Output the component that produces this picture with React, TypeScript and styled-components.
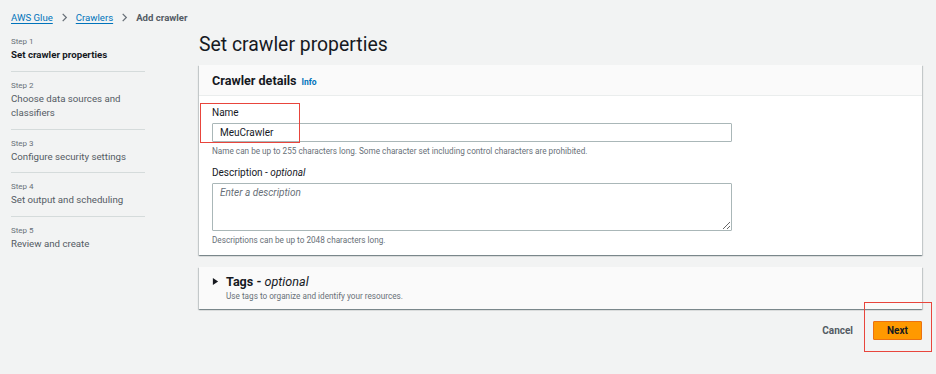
import styled, { createGlobalStyle } from 'styled-components';

const GlobalStyle = createGlobalStyle`
  html, body {
    margin: 0;
    padding: 0;
    background: #f2f3f3;
    font-family: Roboto, "Noto Sans", Arial, sans-serif;
    color: #16191f;
  }
`;

const Page = styled.div`
  width: 936px;
  height: 374px;
  padding: 0 14px 0 11px;
  box-sizing: border-box;
  overflow: hidden;
`;

const Breadcrumbs = styled.nav`
  display: flex;
  align-items: center;
  gap: 7px;
  height: 34px;
  font-size: 9.6px;
`;

const Crumb = styled.a`
  color: #0073bb;
  text-decoration: underline;
  text-underline-offset: 2px;
`;

const Current = styled.span`
  color: #545b64;
  font-weight: 700;
`;

const Chevron = styled.svg`
  width: 9px;
  height: 9px;
`;

const Layout = styled.div`
  display: grid;
  grid-template-columns: 134px 1fr;
  column-gap: 54px;
`;

const Steps = styled.ol`
  list-style: none;
  margin: 0;
  padding: 1px 0 0;
`;

const Step = styled.li<{ $last?: boolean }>`
  padding: 0 0 8px;
  margin-bottom: 7px;
  border-bottom: ${(p) => (p.$last ? 'none' : '1px solid #d5dbdb')};
`;

const StepNum = styled.div`
  font-size: 8px;
  line-height: 13px;
  color: #687078;
`;

const StepTitle = styled.div<{ $active?: boolean }>`
  font-size: 9.7px;
  line-height: 14.5px;
  color: ${(p) => (p.$active ? '#16191f' : '#545b64')};
  font-weight: ${(p) => (p.$active ? 700 : 400)};
`;

const Main = styled.main`
  display: flex;
  flex-direction: column;
`;

const Title = styled.h1`
  margin: 0 0 9px;
  font-size: 19.4px;
  line-height: 22px;
  font-weight: 400;
  color: #16191f;
`;

const Card = styled.section`
  background: #fff;
  box-shadow: 0 1px 1px 0 rgba(0, 28, 36, 0.3), 1px 1px 1px 0 rgba(0, 28, 36, 0.15),
    -1px 1px 1px 0 rgba(0, 28, 36, 0.15);
  margin-bottom: 12px;
`;

const CardHeader = styled.header`
  display: flex;
  align-items: baseline;
  gap: 5px;
  height: 31px;
  padding: 0 13px;
  box-sizing: border-box;
  line-height: 31px;
  background: #fafafa;
  border-bottom: 1px solid #eaeded;
`;

const CardTitle = styled.h2`
  margin: 0;
  font-size: 12.6px;
  font-weight: 700;
`;

const Info = styled.a`
  font-size: 8.5px;
  font-weight: 700;
  color: #0073bb;
`;

const CardBody = styled.div`
  padding: 10px 13px 9px;
`;

const Field = styled.div`
  position: relative;
  & + & {
    margin-top: 9px;
  }
`;

const Label = styled.label`
  display: block;
  font-size: 10px;
  line-height: 14px;
  margin-bottom: 3px;
  color: #16191f;
`;

const TextInput = styled.input`
  display: block;
  width: 520px;
  height: 19px;
  box-sizing: border-box;
  padding: 0 7px;
  border: 1px solid #aab7b8;
  border-radius: 1px;
  font-family: inherit;
  font-size: 10px;
  color: #16191f;
`;

const TextArea = styled.textarea`
  display: block;
  width: 520px;
  height: 48px;
  box-sizing: border-box;
  padding: 3px 7px;
  border: 1px solid #aab7b8;
  border-radius: 1px;
  font-family: inherit;
  font-size: 10px;
  resize: vertical;
  &::placeholder {
    color: #687078;
    font-style: italic;
  }
`;

const Hint = styled.div`
  font-size: 8.2px;
  line-height: 12px;
  margin-top: 3px;
  color: #687078;
`;

const Highlight = styled.div<{ $w: number; $h: number; $x: number; $y: number }>`
  position: absolute;
  left: ${(p) => p.$x}px;
  top: ${(p) => p.$y}px;
  width: ${(p) => p.$w}px;
  height: ${(p) => p.$h}px;
  border: 1.5px solid #e8453c;
  box-sizing: border-box;
  pointer-events: none;
`;

const TagsRow = styled.div`
  display: flex;
  gap: 7px;
  padding: 6px 13px 7px;
  background: #fafafa;
`;

const Caret = styled.svg`
  width: 7px;
  height: 7px;
  margin-top: 5px;
`;

const TagsTitle = styled.div`
  font-size: 12.6px;
  line-height: 17px;
  font-weight: 700;
  em {
    font-weight: 400;
  }
`;

const TagsHint = styled(Hint)`
  margin-top: 0;
`;

const Actions = styled.div`
  position: relative;
  display: flex;
  justify-content: flex-end;
  align-items: center;
  gap: 20px;
`;

const Button = styled.button<{ $primary?: boolean }>`
  font-family: inherit;
  font-size: 10px;
  font-weight: 700;
  height: 19px;
  padding: 0;
  width: ${(p) => (p.$primary ? '49px' : 'auto')};
  border: ${(p) => (p.$primary ? '1px solid #ec7211' : 'none')};
  border-radius: 1px;
  background: ${(p) => (p.$primary ? '#ff9900' : 'transparent')};
  color: ${(p) => (p.$primary ? '#16191f' : '#545b64')};
  cursor: pointer;
`;

const steps = [
  ['Step 1', 'Set crawler properties'],
  ['Step 2', 'Choose data sources and classifiers'],
  ['Step 3', 'Configure security settings'],
  ['Step 4', 'Set output and scheduling'],
  ['Step 5', 'Review and create'],
];

const ChevronIcon = () => (
  <Chevron viewBox="0 0 10 10">
    <path d="M3 1l4 4-4 4" fill="none" stroke="#687078" strokeWidth="1.4" />
  </Chevron>
);

export default function App() {
  return (
    <Page>
      <GlobalStyle />
      <Breadcrumbs>
        <Crumb>AWS Glue</Crumb>
        <ChevronIcon />
        <Crumb>Crawlers</Crumb>
        <ChevronIcon />
        <Current>Add crawler</Current>
      </Breadcrumbs>
      <Layout>
        <Steps>
          {steps.map(([n, t], i) => (
            <Step key={n} $last={i === steps.length - 1}>
              <StepNum>{n}</StepNum>
              <StepTitle $active={i === 0}>{t}</StepTitle>
            </Step>
          ))}
        </Steps>
        <Main>
          <Title>Set crawler properties</Title>
          <Card>
            <CardHeader>
              <CardTitle>Crawler details</CardTitle>
              <Info>Info</Info>
            </CardHeader>
            <CardBody>
              <Field>
                <Label>Name</Label>
                <TextInput defaultValue="MeuCrawler" />
                <Highlight $x={-12} $y={-3} $w={100} $h={40} />
                <Hint>
                  Name can be up to 255 characters long. Some character set including control characters are
                  prohibited.
                </Hint>
              </Field>
              <Field>
                <Label>
                  Description - <em>optional</em>
                </Label>
                <TextArea placeholder="Enter a description" />
                <Hint>Descriptions can be up to 2048 characters long.</Hint>
              </Field>
            </CardBody>
          </Card>
          <Card>
            <TagsRow>
              <Caret viewBox="0 0 8 8">
                <path d="M1 0l6 4-6 4z" fill="#16191f" />
              </Caret>
              <div>
                <TagsTitle>
                  Tags - <em>optional</em>
                </TagsTitle>
                <TagsHint>Use tags to organize and identify your resources.</TagsHint>
              </div>
            </TagsRow>
          </Card>
          <Actions>
            <Button>Cancel</Button>
            <Button $primary>Next</Button>
            <Highlight $x={665} $y={-19} $w={68} $h={50} />
          </Actions>
        </Main>
      </Layout>
    </Page>
  );
}
